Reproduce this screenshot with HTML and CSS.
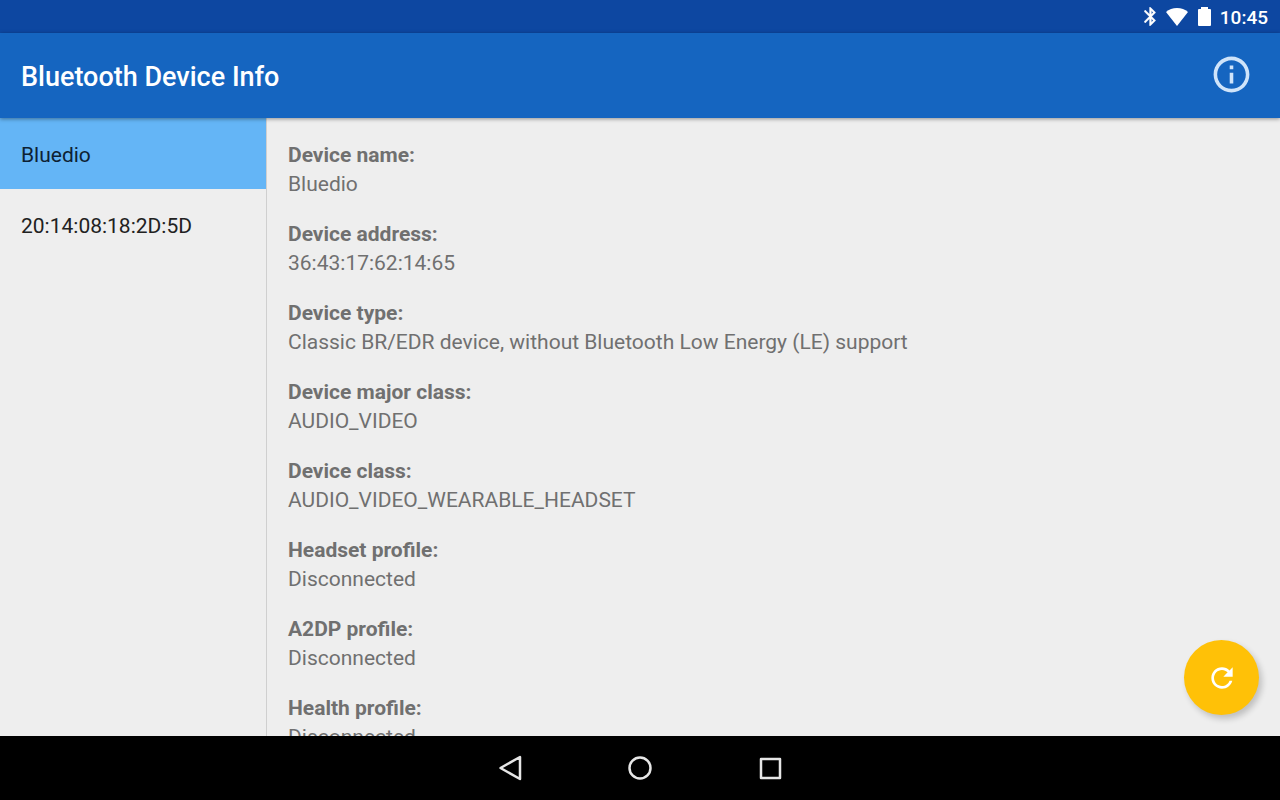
FILE: index.html
```html
<!DOCTYPE html>
<html lang="en">
<head>
<meta charset="utf-8">
<meta name="viewport" content="width=device-width, initial-scale=1">
<title>Bluetooth Device Info</title>
<link rel="stylesheet" href="styles.css">
</head>
<body>
<div class="status-bar">
  <svg class="status-bluetooth" viewBox="5 2 13 20" aria-hidden="true"><path d="M17.710 7.710L12 2h-1v7.590L6.410 5 5 6.410 10.590 12 5 17.590 6.410 19 11 14.410V22h1l5.710-5.710-4.300-4.290 4.300-4.290zM13 5.830l1.880 1.880L13 9.590V5.830zm1.880 10.460L13 18.170v-3.760l1.880 1.880z" fill="#fff" stroke="#fff" stroke-width="0.400"/></svg>
  <svg class="status-wifi" viewBox="0 0 22 18" aria-hidden="true"><path d="M11 18L0 4Q4.500 0 11 0T22 4Z" fill="#fff"/></svg>
  <svg class="status-battery" viewBox="0 0 13 19" aria-hidden="true"><path d="M3 0h7v2h2q1 0 1 1v15q0 1-1 1H1q-1 0-1-1V3q0-1 1-1h2z" fill="#fff"/></svg>
  <time class="clock">10:45</time>
</div>
<header class="app-bar">
  <h1 class="title">Bluetooth Device Info</h1>
  <button class="info-button" type="button" aria-label="About">
    <svg class="info-icon" viewBox="0 0 24 24" aria-hidden="true"><path d="M11 17h2v-6h-2v6zm1-15C6.480 2 2 6.480 2 12s4.480 10 10 10 10-4.480 10-10S17.520 2 12 2zm0 18c-4.410 0-8-3.590-8-8s3.590-8 8-8 8 3.590 8 8-3.590 8-8 8zM11 9h2V7h-2v2z"/></svg>
  </button>
</header>
<div class="content">
  <nav class="devices" aria-label="Devices">
    <a class="device device-selected" href="#details">Bluedio</a>
    <a class="device" href="#details">20:14:08:18:2D:5D</a>
  </nav>
  <main class="details" id="details">
    <dl class="fields">
      <div><dt>Device name:</dt><dd>Bluedio</dd></div>
      <div><dt>Device address:</dt><dd>36:43:17:62:14:65</dd></div>
      <div><dt>Device type:</dt><dd>Classic BR/EDR device, without Bluetooth Low Energy (LE) support</dd></div>
      <div><dt>Device major class:</dt><dd>AUDIO_VIDEO</dd></div>
      <div><dt>Device class:</dt><dd>AUDIO_VIDEO_WEARABLE_HEADSET</dd></div>
      <div><dt>Headset profile:</dt><dd>Disconnected</dd></div>
      <div><dt>A2DP profile:</dt><dd>Disconnected</dd></div>
      <div><dt>Health profile:</dt><dd>Disconnected</dd></div>
    </dl>
  </main>
  <button class="refresh" type="button" aria-label="Refresh">
    <svg class="refresh-icon" viewBox="0 0 24 24" aria-hidden="true"><path d="M17.650 6.350C16.200 4.900 14.210 4 12 4c-4.420 0-7.990 3.580-7.990 8s3.570 8 7.990 8c3.730 0 6.840-2.550 7.730-6h-2.080c-.820 2.330-3.040 4-5.650 4-3.310 0-6-2.690-6-6s2.690-6 6-6c1.660 0 3.140.690 4.220 1.780L13 11h7V4l-2.350 2.350z" fill="#fff"/></svg>
  </button>
</div>
<footer class="nav-bar">
  <button class="nav-button" type="button" aria-label="Back"><svg class="nav-icon" viewBox="0 0 32 32" aria-hidden="true"><path d="M6.500 16L26 5V27Z"/></svg></button>
  <button class="nav-button" type="button" aria-label="Home"><svg class="nav-icon" viewBox="0 0 32 32" aria-hidden="true"><circle cx="16" cy="16" r="10.500"/></svg></button>
  <button class="nav-button" type="button" aria-label="Recent apps"><svg class="nav-icon" viewBox="0 0 32 32" aria-hidden="true"><rect x="7" y="7" width="19" height="19"/></svg></button>
</footer>
</body>
</html>
```
FILE: styles.css
```css
* {
  box-sizing: border-box;
}

body {
  margin: 0;
  height: 100vh;
  display: flex;
  flex-direction: column;
  overflow: hidden;
  background: #eeeeee;
  font-family: Roboto, "Liberation Sans", sans-serif;
  font-size: 21px;
}

button {
  display: flex;
  align-items: center;
  justify-content: center;
  border: 0;
  padding: 0;
  background: none;
  cursor: pointer;
}

svg {
  display: block;
}

.status-bar {
  display: flex;
  flex: none;
  align-items: center;
  justify-content: flex-end;
  height: 33px;
  padding-right: 12px;
  background: #0d47a1;
}

.status-bluetooth {
  width: 12px;
  height: 19px;
}

.status-wifi {
  width: 22px;
  height: 18px;
  margin-left: 10px;
}

.status-battery {
  width: 13px;
  height: 19px;
  margin-left: 10px;
}

.clock {
  margin-left: 9px;
  padding-top: 2px;
  color: #fff;
  font-size: 19px;
  font-weight: 500;
}

.app-bar {
  position: relative;
  z-index: 1;
  display: flex;
  flex: none;
  align-items: center;
  justify-content: space-between;
  height: 85px;
  padding: 0 27px 0 21px;
  background: #1565c0;
  box-shadow: 0 1px 4px rgba(0, 0, 0, 0.4);
}

.title {
  margin: 0;
  padding-top: 2px;
  color: #fff;
  font-size: 27px;
  font-weight: 500;
}

.info-button {
  padding-bottom: 2px;
}

.info-icon {
  width: 43px;
  height: 43px;
  fill: #cfe4fa;
}

.content {
  position: relative;
  display: flex;
  flex: 1;
  min-height: 0;
}

.devices {
  flex: none;
  width: 267px;
  border-right: 1px solid #cfcfcf;
}

.device {
  display: flex;
  align-items: center;
  height: 71px;
  padding: 2px 21px 0;
  color: #212121;
  text-decoration: none;
}

.device-selected {
  background: #64b5f6;
  color: #0d2133;
}

.details {
  flex: 1;
  overflow: hidden;
  padding: 23px 21px 0;
  color: #707070;
  line-height: 29px;
}

.fields {
  display: grid;
  gap: 21px;
  margin: 0;
}

dt {
  font-weight: 700;
}

dd {
  margin: 0;
}

.refresh {
  position: absolute;
  right: 21px;
  bottom: 21px;
  width: 75px;
  height: 75px;
  border-radius: 50%;
  background: #ffc107;
  box-shadow: 3px 4px 6px rgba(0, 0, 0, 0.2);
}

.refresh-icon {
  width: 32px;
  height: 32px;
}

.nav-bar {
  display: flex;
  flex: none;
  align-items: center;
  justify-content: center;
  height: 64px;
  background: #000;
}

.nav-button {
  width: 130px;
  height: 64px;
}

.nav-icon {
  width: 32px;
  height: 32px;
  fill: none;
  stroke: #e6e6e6;
  stroke-width: 2.500;
  stroke-linejoin: round;
}
```
